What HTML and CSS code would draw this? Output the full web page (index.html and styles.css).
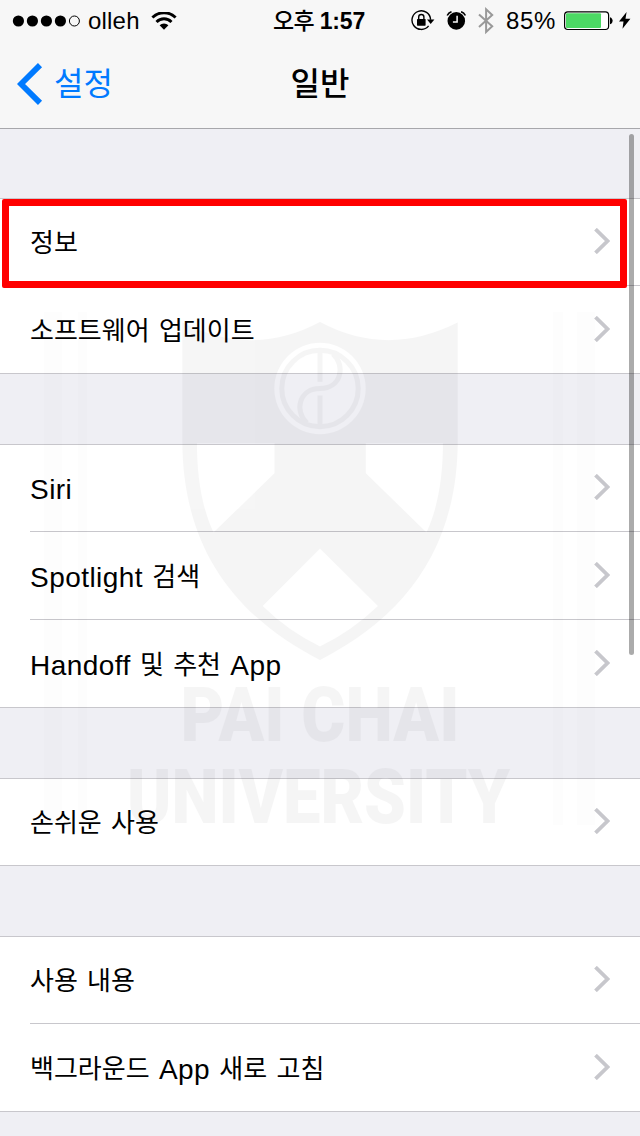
FILE: index.html
```html
<!DOCTYPE html>
<html lang="ko">
<head>
<meta charset="utf-8">
<title>일반</title>
<link rel="stylesheet" href="styles.css">
</head>
<body>
<div class="screen">
  <header class="header">
    <div class="status">
      <div class="status-left">
        <svg class="signal" width="70" height="14" viewBox="0 0 70 14">
          <circle cx="6.4" cy="7" r="5.6"/><circle cx="20.4" cy="7" r="5.6"/><circle cx="34.4" cy="7" r="5.6"/><circle cx="48.4" cy="7" r="5.6"/>
          <circle cx="62.4" cy="7" r="5" fill="none" stroke="#000"/>
        </svg>
        <span class="carrier">olleh</span>
        <svg class="wifi" width="26" height="19" viewBox="0 0 26 19">
          <g fill="none" stroke="#000" stroke-width="2.9"><path d="M1.4 5.5a16.5 16.5 0 0 1 23.2 0"/><path d="M5.5 9.9a10.6 10.6 0 0 1 15 0"/></g>
          <path d="M8.6 13.3a6.2 6.2 0 0 1 8.8 0L13 17.7z"/>
        </svg>
      </div>
      <div class="clock"><span class="clock-ko">오후</span> 1:57</div>
      <div class="status-right">
        <svg class="lock" width="24" height="22" viewBox="0 0 24 22">
          <path d="M17.6 15.9A9.3 9.3 0 1 1 19.6 9.7" fill="none" stroke="#000" stroke-width="1.4"/>
          <path d="M16 9.5h7.4l-3.7 4.4z"/><rect x="6" y="9" width="8.6" height="6.7" rx=".6"/>
          <path d="M7.7 9.5V7.1a2.6 2.6 0 0 1 5.2 0v2.4" fill="none" stroke="#000" stroke-width="1.4"/>
        </svg>
        <svg class="alarm" width="20" height="20" viewBox="0 0 20 20">
          <circle cx="10.3" cy="9.9" r="8.8"/>
          <path d="M1.2 4.5A7.5 7.5 0 0 1 5.5 .7M15.1 .7a7.5 7.5 0 0 1 4.3 3.8" fill="none" stroke="#000" stroke-width="1.6"/>
          <path d="M11.1 4.8v6.1H6.9" fill="none" stroke="#f7f7f7" stroke-width="1.5"/>
        </svg>
        <svg class="bluetooth" width="16" height="28" viewBox="0 0 16 28">
          <path d="M1 7.4 14.2 19.3 8.1 25V2.3L14.2 8 1 20" fill="none" stroke="#999" stroke-width="2"/>
        </svg>
        <span class="percent">85%</span>
        <svg class="battery" width="49" height="20" viewBox="0 0 49 20">
          <rect x=".6" y=".9" width="44" height="17.6" rx="3.2" fill="#fff" stroke="#000" stroke-width="1.2"/>
          <rect x="2" y="2.3" width="35" height="14.8" rx="1" fill="#4cd964"/>
          <path d="M46 6.3c3.5 1 3.5 6 0 7z"/>
        </svg>
        <svg class="bolt" width="12" height="18" viewBox="0 0 12 18"><path d="M7.6 0 0 9.6h4.5L3.5 16.8 11.4 6.8H6.5z"/></svg>
      </div>
    </div>
    <nav class="nav">
      <a class="back"><svg width="27" height="42" viewBox="0 0 27 42"><path d="M23 2.1 4 21 23 39.9" fill="none" stroke="#007aff" stroke-width="5.8"/></svg><span>설정</span></a>
      <h1 class="title">일반</h1>
    </nav>
  </header>
  <main class="list">
    <section class="group">
      <div class="row"><span class="label">정보</span><svg class="chevron" viewBox="0 0 16 26"><path d="M1.5 1.2 13.5 13 1.5 24.8"/></svg></div>
      <div class="row"><span class="label">소프트웨어 업데이트</span><svg class="chevron" viewBox="0 0 16 26"><path d="M1.5 1.2 13.5 13 1.5 24.8"/></svg></div>
    </section>
    <section class="group">
      <div class="row"><span class="label"><span class="latin">Siri</span></span><svg class="chevron" viewBox="0 0 16 26"><path d="M1.5 1.2 13.5 13 1.5 24.8"/></svg></div>
      <div class="row"><span class="label"><span class="latin">Spotlight</span> 검색</span><svg class="chevron" viewBox="0 0 16 26"><path d="M1.5 1.2 13.5 13 1.5 24.8"/></svg></div>
      <div class="row"><span class="label"><span class="latin">Handoff</span> 및 추천 <span class="latin">App</span></span><svg class="chevron" viewBox="0 0 16 26"><path d="M1.5 1.2 13.5 13 1.5 24.8"/></svg></div>
    </section>
    <section class="group">
      <div class="row"><span class="label">손쉬운 사용</span><svg class="chevron" viewBox="0 0 16 26"><path d="M1.5 1.2 13.5 13 1.5 24.8"/></svg></div>
    </section>
    <section class="group">
      <div class="row"><span class="label">사용 내용</span><svg class="chevron" viewBox="0 0 16 26"><path d="M1.5 1.2 13.5 13 1.5 24.8"/></svg></div>
      <div class="row"><span class="label">백그라운드 <span class="latin">App</span> 새로 고침</span><svg class="chevron" viewBox="0 0 16 26"><path d="M1.5 1.2 13.5 13 1.5 24.8"/></svg></div>
    </section>
  </main>
  <svg class="watermark" width="640" height="1136" viewBox="0 0 640 1136">
    <g fill-opacity=".006"><path d="M44 312h18v513H44zM78 312h9v513h-9zM553 312h10v513h-10zM577 312h18v513h-18z"/></g>
    <g opacity=".036">
      <path fill-rule="evenodd" d="M182.3 322.5Q253 358 320 322Q387 358 457.7 322.5V440C457.7 545 408 615 320 660C232 615 182.3 545 182.3 440zM197 443.3C197 477 202 508 213.5 532.5L274.5 473.3V443.3zM443 443.3C443 477 438 508 426.5 532.5L365.8 473.3V443.3zM320 548.5L262.6 606Q288 631 320 646.5Q352 631 378 606zM320 342.8a45.7 45.7 0 1 0 0 91.4a45.7 45.7 0 1 0 0-91.4z"/>
      <g fill="none" stroke="#000" stroke-width="5"><circle cx="320" cy="388.5" r="38.2"/><path d="M320 352v29.7M320 395.5V425M333 354C346 366 341 388.5 320 388.5C299 388.5 294 411 307 423"/></g>
      <g class="wm-text"><text x="180.5" y="741" textLength="279" lengthAdjust="spacingAndGlyphs">PAI CHAI</text><text x="127" y="822.5" textLength="383" lengthAdjust="spacingAndGlyphs">UNIVERSITY</text></g>
    </g>
  </svg>
  <div class="highlight"></div>
  <div class="scrollbar"></div>
</div>
</body>
</html>
```
FILE: styles.css
```css
* { box-sizing: border-box; }
body { margin: 0; font-family: "Liberation Sans", "Noto Sans CJK KR", sans-serif; color: #000; }
svg { display: block; flex: none; }
.screen { position: relative; width: 640px; height: 1136px; overflow: hidden; background: #efeff4; }
.header { height: 129px; background: #f7f7f7; border-bottom: 1px solid #a7a7ab; }
.status { display: grid; grid-template-columns: 1fr auto 1fr; height: 40px; align-items: center; font-size: 24px; line-height: 42px; }
.status-left { display: flex; align-items: center; padding-left: 12px; }
.carrier { margin-left: 6px; width: 53px; letter-spacing: .2px; }
.wifi { margin-left: 10px; }
.clock { display: flex; gap: 6px; font-weight: 700; font-size: 23px; letter-spacing: -.2px; white-space: nowrap; position: relative; left: -1px; }
.clock-ko { font-family: "Noto Sans CJK KR", sans-serif; font-size: 23px; font-weight: 500; letter-spacing: -.8px; line-height: 38px; }
.status-right { display: flex; align-items: center; justify-content: flex-end; padding-right: 9px; }
.alarm { margin-left: 11px; }
.bluetooth { margin-left: 12px; }
.percent { margin-left: 12px; width: 51px; letter-spacing: .6px; }
.battery { margin-left: 7px; }
.bolt { margin-left: 6px; }
.nav { display: grid; grid-template-columns: 1fr auto 1fr; height: 88px; align-items: center; font-family: "Noto Sans CJK KR", sans-serif; }
.back { display: flex; align-items: center; gap: 10px; padding-left: 17px; color: #007aff; font-size: 32px; line-height: 48px; font-weight: 400; }
.back span { margin-top: -6px; }
.title { margin: -6px 0 0; font-size: 32px; line-height: 48px; font-weight: 500; }
.list { display: flex; flex-direction: column; gap: 70px; padding-top: 69px; }
.group { background: #fff; box-shadow: inset 0 1px #c8c7cc, inset 0 -1px #c8c7cc; }
.row { display: flex; align-items: center; justify-content: space-between; height: 88px; margin-left: 30px; padding: 0 30px 2px 0; border-bottom: 1px solid #c8c7cc; }
.row:last-child { border-bottom-color: transparent; }
.label { font-family: "Noto Sans CJK KR", sans-serif; font-size: 26px; line-height: 40px; font-weight: 400; word-spacing: 2px; white-space: pre; }
.latin { position: relative; top: 1px; font-family: "Liberation Sans", sans-serif; font-size: 28px; line-height: 0; letter-spacing: .45px; }
.chevron { width: 16px; height: 26px; fill: none; stroke: #c7c7cc; stroke-width: 3.8; }
.watermark { position: absolute; left: 0; top: 0; }
.wm-text { font: 900 76px Roboto, sans-serif; }
.highlight { position: absolute; left: 2px; top: 199px; width: 625px; height: 89px; border: 7px solid #f00; border-radius: 2px; }
.scrollbar { position: absolute; left: 629px; top: 134px; width: 5px; height: 521px; border-radius: 3px; background: rgba(0,0,0,.33); }
```
